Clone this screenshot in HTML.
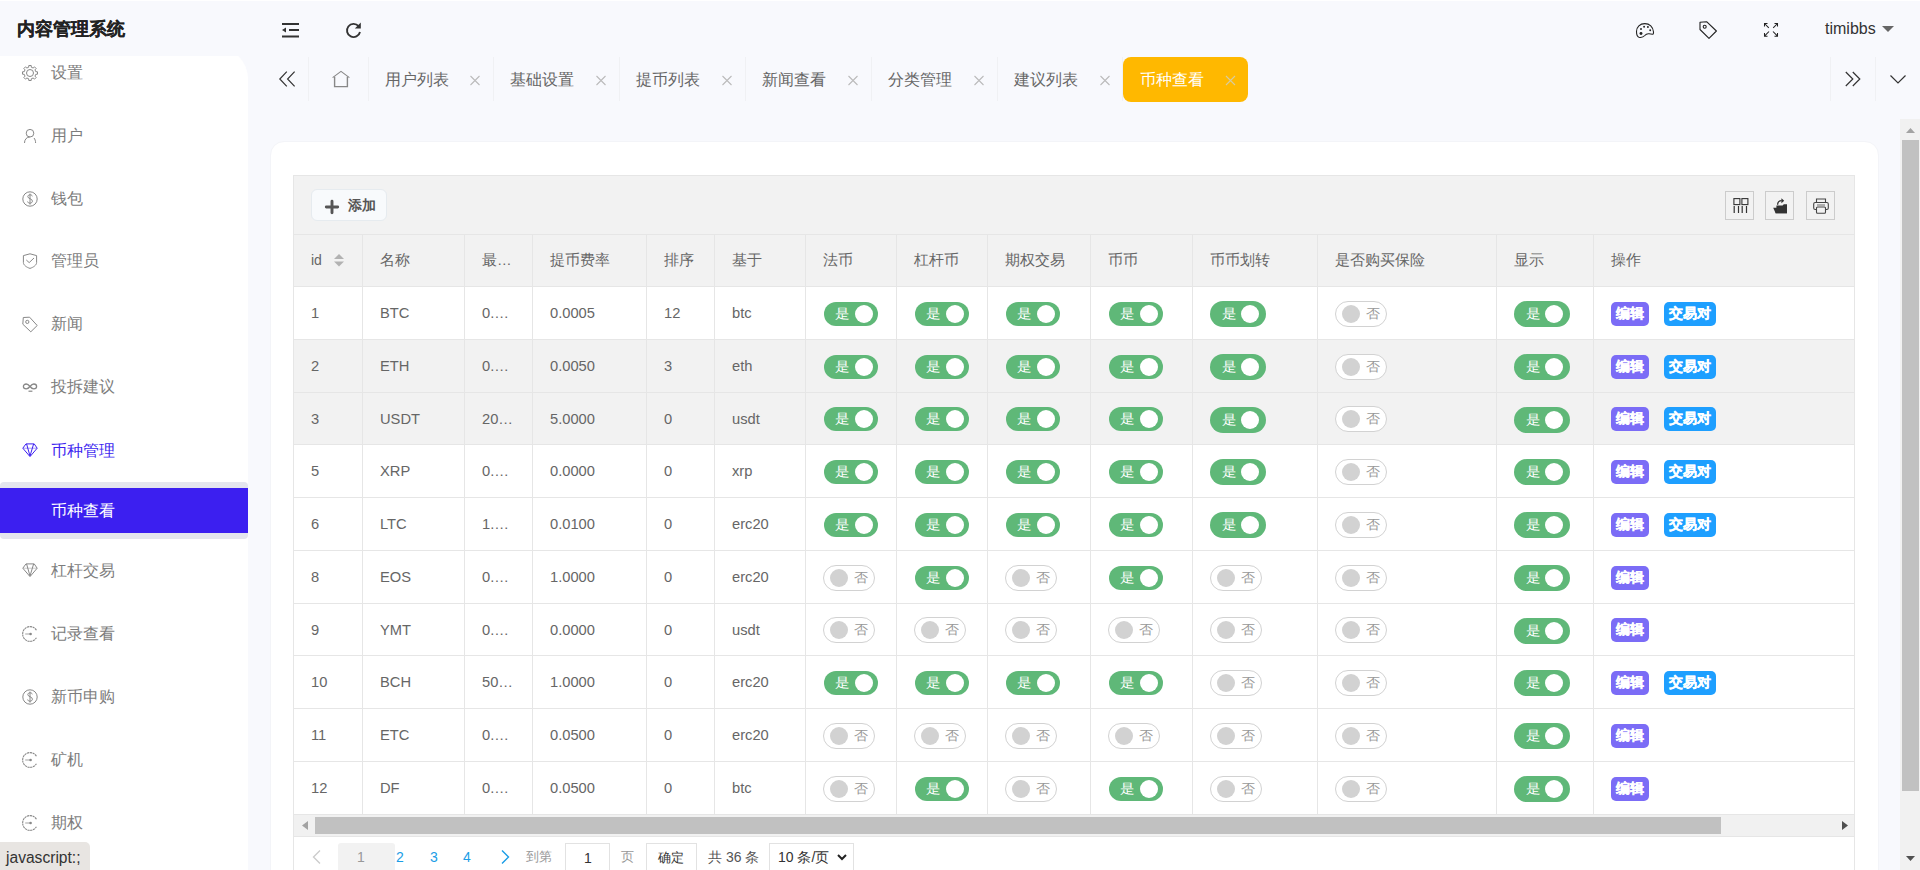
<!DOCTYPE html>
<html><head><meta charset="utf-8"><style>
*{margin:0;padding:0;box-sizing:border-box}
html,body{width:1920px;height:870px;overflow:hidden;background:#f8f9fd;font-family:"Liberation Sans",sans-serif;color:#666;position:relative}
.a{position:absolute}
svg.i{position:absolute;overflow:visible}
.logo{left:17px;top:18px;font-size:18px;font-weight:bold;color:#222;line-height:22px;white-space:nowrap;-webkit-text-stroke:0.2px #222}
.user{left:1825px;top:19px;font-size:16px;color:#333;line-height:20px}
.side{left:0;top:46.5px;width:248px;height:824px;background:#fff;border-top-right-radius:32px}
.mi{position:absolute;left:51px;font-size:16px;color:#7c7c7c;line-height:20px;white-space:nowrap}
.sub{left:0;top:482px;width:248px;height:57px;background:#e4e5ee;border-radius:4px}
.subsel{left:0;top:488px;width:248px;height:45px;background:#3c1ff0}
.status{left:0;top:842px;width:90px;height:28px;background:#e8e5e2;border-top-right-radius:5px;font-size:15.6px;color:#333;padding:7px 0 0 6px;line-height:18px;white-space:nowrap}
.tab{position:absolute;top:57px;height:44px;width:126px;border-left:1px solid #eceef2}
.tt{position:absolute;left:16px;top:12px;font-size:16px;line-height:20px;color:#666;white-space:nowrap}
.card{left:270px;top:141px;width:1609px;height:760px;background:#fff;border-radius:14px;border:1px solid #f3f4f8}
.tbl{left:293px;top:175px;width:1562px;height:720px;border:1px solid #e6e6e6;background:#fff}
.tool{left:294px;top:176px;width:1560px;height:59px;background:#f2f2f2}
.vs{left:1900px;top:119px;width:20px;height:751px;background:#f1f1f1}
.hl{position:absolute;height:1px;background:#e6e6e6}
.vl{position:absolute;width:1px;background:#e6e6e6}
.ht{position:absolute;font-size:14px;line-height:18px;color:#666;white-space:nowrap}
.ct{position:absolute;font-size:14.7px;line-height:18px;color:#666;white-space:nowrap}
.son{position:absolute;width:54px;height:24px;border-radius:12px;background:#5fb878}
.son b{position:absolute;left:31px;top:3px;width:18px;height:18px;border-radius:50%;background:#fff}
.son span{position:absolute;left:10.5px;top:5px;font-size:13px;line-height:14px;color:#fff;transform:scaleX(1.12);transform-origin:0 0}
.son.big{width:56px;height:26px;border-radius:13px}
.son.big b{left:31px;top:4px}
.son.big span{left:12px;top:6px}
.sof{position:absolute;width:52px;height:26px;border-radius:13px;border:1px solid #d2d2d2;background:#fff}
.sof b{position:absolute;left:6px;top:3px;width:18px;height:18px;border-radius:50%;background:#d2d2d2}
.sof span{position:absolute;left:29.5px;top:5px;font-size:13px;line-height:14px;color:#999;transform:scaleX(1.08);transform-origin:0 0}
.btn{position:absolute;height:24px;border-radius:5px;color:#fff;font-size:13.6px;font-weight:bold;-webkit-text-stroke:0.35px #fff;line-height:24px;text-align:center;white-space:nowrap}
.tb{position:absolute;top:191px;width:29px;height:29px;border:1px solid #ccc}
.pg{position:absolute;font-size:13px;line-height:16px;white-space:nowrap}
.box{position:absolute;top:843px;height:30px;border:1px solid #e2e2e2;background:#fff}
</style></head><body>
<div class="a" style="left:0;top:0;width:1920px;height:1px;background:#fff"></div>
<div class="a side"></div>
<div class="a" style="left:0;top:1px;width:260px;height:55px;background:#f8f9fd"></div>
<div class="a logo">内容管理系统</div>
<svg class="i" style="left:282px;top:22px" width="18" height="16" viewBox="0 0 18 16"><rect x="0" y="1" width="17" height="2" fill="#333"/><rect x="7" y="7" width="10" height="2" fill="#333"/><polygon points="0,8 4,5.5 4,10.5" fill="#333"/><rect x="0" y="13.5" width="17" height="2" fill="#333"/></svg>
<svg class="i" style="left:345px;top:22px" width="17" height="17" viewBox="0 0 17 17"><path d="M13.6 4.2 A6.6 6.6 0 1 0 15 10" fill="none" stroke="#333" stroke-width="1.9"/><polygon points="15.8,0.6 15.8,6.6 9.8,6.6" fill="#333"/></svg>
<svg class="i" style="left:1636px;top:23px" width="19" height="16" viewBox="0 0 19 16"><path d="M3 14.3 C1 13.5 0.5 11 0.5 8.5 C0.5 3.8 4 0.6 8.8 0.6 C13.5 0.6 17.2 4 17.5 9 C17.6 10.5 17.2 11.2 16.4 11.2 L13 10.8 C11 10.6 10 11 8.8 12.5 C7.5 14 5.5 14.8 3 14.3 Z" fill="none" stroke="#222" stroke-width="1.1"/><circle cx="5" cy="10.5" r="1.45" fill="#222"/><circle cx="5" cy="6" r="0.95" fill="#222"/><circle cx="8.1" cy="3.8" r="0.95" fill="#222"/><circle cx="11.9" cy="4" r="0.95" fill="#222"/><circle cx="14.2" cy="7.2" r="0.95" fill="#222"/></svg>
<svg class="i" style="left:1699px;top:21px" width="19" height="19" viewBox="0 0 19 19" fill="none" stroke="#222" stroke-width="1.1" stroke-linejoin="round"><path d="M1 1.2 L7.6 0.7 L17.4 10 L10 17.4 L1 8.5 Z"/><circle cx="5.7" cy="5.8" r="1.5"/></svg>
<svg class="i" style="left:1764px;top:23px" width="14" height="14" viewBox="0 0 14 14" fill="none" stroke="#222" stroke-width="1.05"><path d="M0.5 3.5 V0.5 H3.5 M0.5 0.5 L4.8 4.8"/><path d="M10.5 0.5 H13.5 V3.5 M13.5 0.5 L9.2 4.8"/><path d="M0.5 10 V13.2 H3.5 M0.5 13.2 L5 8.5"/><path d="M13.5 10 V13.2 H10.5 M13.5 13.2 L9 8.5"/></svg>
<div class="a user">timibbs</div>
<svg class="i" style="left:1882px;top:26px" width="12" height="6" viewBox="0 0 12 6"><polygon points="0,0 12,0 6,6" fill="#666"/></svg>
<svg class="i" style="left:22.4px;top:65px" width="16" height="16" viewBox="0 0 16 16" fill="none" stroke="#888" stroke-width="1"><polygon points="13.75,6.67 15.51,6.81 15.51,9.19 13.75,9.33 13.00,11.13 14.15,12.47 12.47,14.15 11.13,13.00 9.33,13.75 9.19,15.51 6.81,15.51 6.67,13.75 4.87,13.00 3.53,14.15 1.85,12.47 3.00,11.13 2.25,9.33 0.49,9.19 0.49,6.81 2.25,6.67 3.00,4.87 1.85,3.53 3.53,1.85 4.87,3.00 6.67,2.25 6.81,0.49 9.19,0.49 9.33,2.25 11.13,3.00 12.47,1.85 14.15,3.53 13.00,4.87" stroke-linejoin="round"/><circle cx="8" cy="8" r="3.5"/></svg>
<div class="mi" style="top:63.0px">设置</div>
<svg class="i" style="left:22.4px;top:127.5px" width="16" height="16" viewBox="0 0 16 16" fill="none" stroke="#888" stroke-width="1"><circle cx="8" cy="5.2" r="3.8"/><path d="M2.5 15 C2.5 11.5 4.5 9.2 7.8 9" /><path d="M12 10 C13 11.2 13.6 12.8 13.6 15"/></svg>
<div class="mi" style="top:125.5px">用户</div>
<svg class="i" style="left:22.4px;top:190.5px" width="16" height="16" viewBox="0 0 16 16" fill="none" stroke="#888" stroke-width="1"><circle cx="8" cy="8" r="7.2"/><path d="M10.3 5.3 C10.1 4.2 9.2 3.8 8 3.8 C6.7 3.8 5.8 4.6 5.8 5.6 C5.8 8 10.4 7.4 10.4 10.1 C10.4 11.3 9.4 12.2 8 12.2 C6.6 12.2 5.8 11.5 5.6 10.5 M8 2.6 V13.6"/></svg>
<div class="mi" style="top:188.5px">钱包</div>
<svg class="i" style="left:22.4px;top:253px" width="16" height="16" viewBox="0 0 16 16" fill="none" stroke="#888" stroke-width="1"><path d="M8 0.8 L14.6 2.6 V9.6 C14.6 12 11.5 14.3 8 15.4 C4.5 14.3 1.4 12 1.4 9.6 V2.6 Z" stroke-linejoin="round"/><path d="M4.3 7 L7.2 9.6 L12 5"/></svg>
<div class="mi" style="top:251.0px">管理员</div>
<svg class="i" style="left:22.4px;top:316px" width="16" height="16" viewBox="0 0 16 16" fill="none" stroke="#888" stroke-width="1"><path d="M1.3 1.5 L7.6 1.2 L15.2 9.5 L8.8 15.8 L0.8 8.2 Z" stroke-linejoin="round"/><circle cx="5.3" cy="5.9" r="1.6"/></svg>
<div class="mi" style="top:314.0px">新闻</div>
<svg class="i" style="left:22.4px;top:379px" width="16" height="16" viewBox="0 0 16 16" fill="none" stroke="#888" stroke-width="1"><path d="M8 7.5 C6.8 6 5.8 5 4.2 5 C2.6 5 1.4 6.2 1.4 7.5 C1.4 8.8 2.6 9.9 4.2 9.9 C5.8 9.9 6.8 9 8 7.5 C9.2 6 10.2 5 11.8 5 C13.4 5 14.6 6.2 14.6 7.5 C14.6 8.8 13.4 9.9 11.8 9.9 C10.2 9.9 9.2 9 8 7.5 Z" stroke-width="1.3"/><path d="M6.5 12.2 H10.4" stroke-width="1.2"/></svg>
<div class="mi" style="top:377.0px">投拆建议</div>
<svg class="i" style="left:22.4px;top:442.5px" width="16" height="16" viewBox="0 0 16 16" fill="none" stroke="#3c1ff0" stroke-width="1"><path d="M4 0.9 H12.2 L15.2 5.2 L8 13.6 L0.8 5.2 Z" stroke-linejoin="round"/><path d="M1 5.2 H15" stroke-opacity="0.45"/><path d="M4.6 1 L8 13 L11.6 1"/></svg>
<div class="mi" style="top:440.5px;color:#3c1ff0">币种管理</div>
<svg class="i" style="left:22.4px;top:562.5px" width="16" height="16" viewBox="0 0 16 16" fill="none" stroke="#888" stroke-width="1"><path d="M4 0.9 H12.2 L15.2 5.2 L8 13.6 L0.8 5.2 Z" stroke-linejoin="round"/><path d="M1 5.2 H15" stroke-opacity="0.45"/><path d="M4.6 1 L8 13 L11.6 1"/></svg>
<div class="mi" style="top:560.5px">杠杆交易</div>
<svg class="i" style="left:22.4px;top:625.5px" width="16" height="16" viewBox="0 0 16 16" fill="none" stroke="#888" stroke-width="1"><path d="M14.4 4.2 A7.4 7.4 0 1 0 14.4 11.8" stroke-dasharray="2.2 0.6" stroke-width="1.1"/><path d="M3.2 8 H8.5" stroke-width="1.3" stroke-opacity="0.6"/><circle cx="8.6" cy="8" r="1.3" fill="#888" stroke="none"/></svg>
<div class="mi" style="top:623.5px">记录查看</div>
<svg class="i" style="left:22.4px;top:688.5px" width="16" height="16" viewBox="0 0 16 16" fill="none" stroke="#888" stroke-width="1"><circle cx="8" cy="8" r="7.2"/><path d="M10.3 5.3 C10.1 4.2 9.2 3.8 8 3.8 C6.7 3.8 5.8 4.6 5.8 5.6 C5.8 8 10.4 7.4 10.4 10.1 C10.4 11.3 9.4 12.2 8 12.2 C6.6 12.2 5.8 11.5 5.6 10.5 M8 2.6 V13.6"/></svg>
<div class="mi" style="top:686.5px">新币申购</div>
<svg class="i" style="left:22.4px;top:751.5px" width="16" height="16" viewBox="0 0 16 16" fill="none" stroke="#888" stroke-width="1"><path d="M14.4 4.2 A7.4 7.4 0 1 0 14.4 11.8" stroke-dasharray="2.2 0.6" stroke-width="1.1"/><path d="M3.2 8 H8.5" stroke-width="1.3" stroke-opacity="0.6"/><circle cx="8.6" cy="8" r="1.3" fill="#888" stroke="none"/></svg>
<div class="mi" style="top:749.5px">矿机</div>
<svg class="i" style="left:22.4px;top:814.5px" width="16" height="16" viewBox="0 0 16 16" fill="none" stroke="#888" stroke-width="1"><path d="M14.4 4.2 A7.4 7.4 0 1 0 14.4 11.8" stroke-dasharray="2.2 0.6" stroke-width="1.1"/><path d="M3.2 8 H8.5" stroke-width="1.3" stroke-opacity="0.6"/><circle cx="8.6" cy="8" r="1.3" fill="#888" stroke="none"/></svg>
<div class="mi" style="top:812.5px">期权</div>
<div class="a sub"></div><div class="a subsel"></div>
<div class="mi" style="top:501px;color:#fff">币种查看</div>
<div class="a status">javascript:;</div>
<svg class="i" style="left:279px;top:71px" width="17" height="17" viewBox="0 0 17 17" fill="none" stroke="#333" stroke-width="1.2"><path d="M7.8 0.6 L0.8 8 L7.8 15.4"/><path d="M15.6 0.6 L8.6 8 L15.6 15.4"/></svg>
<div class="a" style="left:308px;top:57px;width:1px;height:44px;background:#f0f1f4"></div>
<svg class="i" style="left:332px;top:71px" width="18" height="17" viewBox="0 0 18 17" fill="none" stroke="#888" stroke-width="1.1"><path d="M0.6 6.6 L9 0.4 L17.4 6.6"/><path d="M2.6 5.8 V15.6 H15.4 V5.8" stroke-width="1.4"/></svg>
<div class="a" style="left:367.5px;top:57px;width:1px;height:44px;background:#f0f1f4"></div>
<div class="tt" style="left:384.5px;top:70px">用户列表</div>
<svg class="i" style="left:470.0px;top:76px" width="10" height="9" viewBox="0 0 10 9" stroke="#bbb" stroke-width="1.1"><path d="M0.5 0 L9.5 9 M9.5 0 L0.5 9"/></svg>
<div class="a" style="left:493.4px;top:57px;width:1px;height:44px;background:#f0f1f4"></div>
<div class="tt" style="left:510.4px;top:70px">基础设置</div>
<svg class="i" style="left:595.9px;top:76px" width="10" height="9" viewBox="0 0 10 9" stroke="#bbb" stroke-width="1.1"><path d="M0.5 0 L9.5 9 M9.5 0 L0.5 9"/></svg>
<div class="a" style="left:619.3px;top:57px;width:1px;height:44px;background:#f0f1f4"></div>
<div class="tt" style="left:636.3px;top:70px">提币列表</div>
<svg class="i" style="left:721.8px;top:76px" width="10" height="9" viewBox="0 0 10 9" stroke="#bbb" stroke-width="1.1"><path d="M0.5 0 L9.5 9 M9.5 0 L0.5 9"/></svg>
<div class="a" style="left:745.2px;top:57px;width:1px;height:44px;background:#f0f1f4"></div>
<div class="tt" style="left:762.2px;top:70px">新闻查看</div>
<svg class="i" style="left:847.7px;top:76px" width="10" height="9" viewBox="0 0 10 9" stroke="#bbb" stroke-width="1.1"><path d="M0.5 0 L9.5 9 M9.5 0 L0.5 9"/></svg>
<div class="a" style="left:871.1px;top:57px;width:1px;height:44px;background:#f0f1f4"></div>
<div class="tt" style="left:888.1px;top:70px">分类管理</div>
<svg class="i" style="left:973.6px;top:76px" width="10" height="9" viewBox="0 0 10 9" stroke="#bbb" stroke-width="1.1"><path d="M0.5 0 L9.5 9 M9.5 0 L0.5 9"/></svg>
<div class="a" style="left:997.0px;top:57px;width:1px;height:44px;background:#f0f1f4"></div>
<div class="tt" style="left:1014.0px;top:70px">建议列表</div>
<svg class="i" style="left:1099.5px;top:76px" width="10" height="9" viewBox="0 0 10 9" stroke="#bbb" stroke-width="1.1"><path d="M0.5 0 L9.5 9 M9.5 0 L0.5 9"/></svg>
<div class="a" style="left:1123px;top:57px;width:125px;height:45px;background:#ffb800;border-radius:8px"></div>
<div class="tt" style="left:1140px;top:70px;color:#fff">币种查看</div>
<svg class="i" style="left:1226px;top:76px" width="9" height="9" viewBox="0 0 9 9" stroke="#d6cba0" stroke-width="1.1"><path d="M0 0 L9 9 M9 0 L0 9"/></svg>
<div class="a" style="left:1122px;top:57px;width:1px;height:44px;background:#f0f1f4"></div>
<div class="a" style="left:1830px;top:57px;width:1px;height:44px;background:#f0f1f4"></div>
<div class="a" style="left:1875px;top:57px;width:1px;height:44px;background:#f0f1f4"></div>
<svg class="i" style="left:1845px;top:71px" width="17" height="17" viewBox="0 0 17 17" fill="none" stroke="#333" stroke-width="1.2"><path d="M0.8 1 L7.8 8 L0.8 15"/><path d="M7.8 1 L14.8 8 L7.8 15"/></svg>
<svg class="i" style="left:1890px;top:75px" width="16" height="9" viewBox="0 0 16 9" fill="none" stroke="#333" stroke-width="1.2"><path d="M0.5 0.5 L8 8 L15.5 0.5"/></svg>
<div class="a card"></div>
<div class="a tbl"></div>
<div class="a tool"></div>
<div class="a" style="left:311px;top:189px;width:76px;height:32px;background:#f8fafc;border:1px solid #e6ebef;border-radius:6px"></div>
<svg class="i" style="left:325px;top:200px" width="14" height="14" viewBox="0 0 14 14"><path d="M1.3 7 H12.7 M7 1.3 V12.7" stroke="#555" stroke-width="2.9" stroke-linecap="round"/></svg>
<div class="a" style="left:348px;top:198px;font-size:13.5px;line-height:16px;font-weight:bold;color:#555">添加</div>
<div class="tb" style="left:1725px"></div>
<div class="tb" style="left:1765px"></div>
<div class="tb" style="left:1806px"></div>
<svg class="i" style="left:1733px;top:198px" width="16" height="16" viewBox="0 0 16 16" fill="none" stroke="#333" stroke-width="1.1"><rect x="0.9" y="0.6" width="6" height="6"/><rect x="8.9" y="0.6" width="6" height="6"/><path d="M1.2 8 V15 M5.5 8 V15 M9.2 8 V15 M13.5 8 V15" stroke-width="1.2"/></svg>
<svg class="i" style="left:1773px;top:198px" width="15" height="16" viewBox="0 0 15 16"><path d="M2.6 15.2 H14 V6.2 H10.8 L9.6 7.6 H3.4 V9.6 Z" fill="#333"/><path d="M0.2 9.7 H11.5 L14 15.2 H2.6 Z" fill="#333"/><path d="M4.6 6.8 C4.6 4 6.2 2.6 8.6 2.6" fill="none" stroke="#333" stroke-width="1.3"/><polygon points="8.4,0.2 11.2,2.7 8.4,5.2" fill="#333"/></svg>
<svg class="i" style="left:1813px;top:198px" width="16" height="16" viewBox="0 0 16 16" fill="none" stroke="#444" stroke-width="1.1"><path d="M3.5 4.5 V1 H12.5 V4.5"/><rect x="0.7" y="4.5" width="14.6" height="7" rx="1.5"/><rect x="3.5" y="9" width="9" height="6.2" rx="1" fill="#f2f2f2"/><path d="M4 7 H12" stroke="#777"/></svg>
<div class="a" style="left:294px;top:235px;width:1560px;height:52px;background:#f2f2f2"></div>
<div class="a" style="left:294px;top:339px;width:1560px;height:53px;background:#f2f2f2"></div>
<div class="a" style="left:294px;top:392px;width:1560px;height:52px;background:#f2f2f2"></div>
<div class="hl" style="left:294px;top:234px;width:1561px"></div>
<div class="hl" style="left:294px;top:286px;width:1561px"></div>
<div class="hl" style="left:294px;top:339px;width:1561px"></div>
<div class="hl" style="left:294px;top:392px;width:1561px"></div>
<div class="hl" style="left:294px;top:444px;width:1561px"></div>
<div class="hl" style="left:294px;top:497px;width:1561px"></div>
<div class="hl" style="left:294px;top:550px;width:1561px"></div>
<div class="hl" style="left:294px;top:603px;width:1561px"></div>
<div class="hl" style="left:294px;top:655px;width:1561px"></div>
<div class="hl" style="left:294px;top:708px;width:1561px"></div>
<div class="hl" style="left:294px;top:761px;width:1561px"></div>
<div class="hl" style="left:294px;top:814px;width:1561px"></div>
<div class="vl" style="left:362px;top:235px;height:579px"></div>
<div class="vl" style="left:464px;top:235px;height:579px"></div>
<div class="vl" style="left:532px;top:235px;height:579px"></div>
<div class="vl" style="left:646px;top:235px;height:579px"></div>
<div class="vl" style="left:714px;top:235px;height:579px"></div>
<div class="vl" style="left:805px;top:235px;height:579px"></div>
<div class="vl" style="left:896px;top:235px;height:579px"></div>
<div class="vl" style="left:987px;top:235px;height:579px"></div>
<div class="vl" style="left:1090px;top:235px;height:579px"></div>
<div class="vl" style="left:1192px;top:235px;height:579px"></div>
<div class="vl" style="left:1317px;top:235px;height:579px"></div>
<div class="vl" style="left:1496px;top:235px;height:579px"></div>
<div class="vl" style="left:1593px;top:235px;height:579px"></div>
<div class="ht" style="left:311.0px;top:251px">id</div>
<div class="ht" style="left:380.0px;top:251px;font-size:14.6px">名称</div>
<div class="ht" style="left:482.0px;top:251px;font-size:14.6px">最…</div>
<div class="ht" style="left:550.0px;top:251px;font-size:14.6px">提币费率</div>
<div class="ht" style="left:664.0px;top:251px;font-size:14.6px">排序</div>
<div class="ht" style="left:732.0px;top:251px;font-size:14.6px">基于</div>
<div class="ht" style="left:823.0px;top:251px;font-size:14.6px">法币</div>
<div class="ht" style="left:914.0px;top:251px;font-size:14.6px">杠杆币</div>
<div class="ht" style="left:1005.0px;top:251px;font-size:14.6px">期权交易</div>
<div class="ht" style="left:1108.0px;top:251px;font-size:14.6px">币币</div>
<div class="ht" style="left:1210.0px;top:251px;font-size:14.6px">币币划转</div>
<div class="ht" style="left:1335.0px;top:251px;font-size:14.6px">是否购买保险</div>
<div class="ht" style="left:1514.0px;top:251px;font-size:14.6px">显示</div>
<div class="ht" style="left:1611.0px;top:251px;font-size:14.6px">操作</div>
<svg class="i" style="left:334px;top:254px" width="10" height="13" viewBox="0 0 10 13"><polygon points="5,0 10,5 0,5" fill="#b2b2b2"/><polygon points="0,7.5 10,7.5 5,12.5" fill="#b2b2b2"/></svg>
<div class="ct" style="left:311px;top:304.0px">1</div>
<div class="ct" style="left:380px;top:304.0px">BTC</div>
<div class="ct" style="left:482px;top:304.0px">0.…</div>
<div class="ct" style="left:550px;top:304.0px">0.0005</div>
<div class="ct" style="left:664px;top:304.0px">12</div>
<div class="ct" style="left:732px;top:304.0px">btc</div>
<div class="son" style="left:824.0px;top:301.8px"><span>是</span><b></b></div>
<div class="son" style="left:915.0px;top:301.8px"><span>是</span><b></b></div>
<div class="son" style="left:1006.0px;top:301.8px"><span>是</span><b></b></div>
<div class="son" style="left:1109.0px;top:301.8px"><span>是</span><b></b></div>
<div class="son big" style="left:1209.9px;top:301.0px"><span>是</span><b></b></div>
<div class="sof" style="left:1335.0px;top:300.9px"><b></b><span>否</span></div>
<div class="son big" style="left:1513.9px;top:301.0px"><span>是</span><b></b></div>
<div class="btn" style="left:1611px;top:301.5px;width:38px;background:#7b6cf6">编辑</div>
<div class="btn" style="left:1664px;top:301.5px;width:52px;background:#1e9fff">交易对</div>
<div class="ct" style="left:311px;top:357.0px">2</div>
<div class="ct" style="left:380px;top:357.0px">ETH</div>
<div class="ct" style="left:482px;top:357.0px">0.…</div>
<div class="ct" style="left:550px;top:357.0px">0.0050</div>
<div class="ct" style="left:664px;top:357.0px">3</div>
<div class="ct" style="left:732px;top:357.0px">eth</div>
<div class="son" style="left:824.0px;top:354.8px"><span>是</span><b></b></div>
<div class="son" style="left:915.0px;top:354.8px"><span>是</span><b></b></div>
<div class="son" style="left:1006.0px;top:354.8px"><span>是</span><b></b></div>
<div class="son" style="left:1109.0px;top:354.8px"><span>是</span><b></b></div>
<div class="son big" style="left:1209.9px;top:354.0px"><span>是</span><b></b></div>
<div class="sof" style="left:1335.0px;top:353.9px"><b></b><span>否</span></div>
<div class="son big" style="left:1513.9px;top:354.0px"><span>是</span><b></b></div>
<div class="btn" style="left:1611px;top:354.5px;width:38px;background:#7b6cf6">编辑</div>
<div class="btn" style="left:1664px;top:354.5px;width:52px;background:#1e9fff">交易对</div>
<div class="ct" style="left:311px;top:409.5px">3</div>
<div class="ct" style="left:380px;top:409.5px">USDT</div>
<div class="ct" style="left:482px;top:409.5px">20…</div>
<div class="ct" style="left:550px;top:409.5px">5.0000</div>
<div class="ct" style="left:664px;top:409.5px">0</div>
<div class="ct" style="left:732px;top:409.5px">usdt</div>
<div class="son" style="left:824.0px;top:407.3px"><span>是</span><b></b></div>
<div class="son" style="left:915.0px;top:407.3px"><span>是</span><b></b></div>
<div class="son" style="left:1006.0px;top:407.3px"><span>是</span><b></b></div>
<div class="son" style="left:1109.0px;top:407.3px"><span>是</span><b></b></div>
<div class="son big" style="left:1209.9px;top:406.5px"><span>是</span><b></b></div>
<div class="sof" style="left:1335.0px;top:406.4px"><b></b><span>否</span></div>
<div class="son big" style="left:1513.9px;top:406.5px"><span>是</span><b></b></div>
<div class="btn" style="left:1611px;top:407.0px;width:38px;background:#7b6cf6">编辑</div>
<div class="btn" style="left:1664px;top:407.0px;width:52px;background:#1e9fff">交易对</div>
<div class="ct" style="left:311px;top:462.0px">5</div>
<div class="ct" style="left:380px;top:462.0px">XRP</div>
<div class="ct" style="left:482px;top:462.0px">0.…</div>
<div class="ct" style="left:550px;top:462.0px">0.0000</div>
<div class="ct" style="left:664px;top:462.0px">0</div>
<div class="ct" style="left:732px;top:462.0px">xrp</div>
<div class="son" style="left:824.0px;top:459.8px"><span>是</span><b></b></div>
<div class="son" style="left:915.0px;top:459.8px"><span>是</span><b></b></div>
<div class="son" style="left:1006.0px;top:459.8px"><span>是</span><b></b></div>
<div class="son" style="left:1109.0px;top:459.8px"><span>是</span><b></b></div>
<div class="son big" style="left:1209.9px;top:459.0px"><span>是</span><b></b></div>
<div class="sof" style="left:1335.0px;top:458.9px"><b></b><span>否</span></div>
<div class="son big" style="left:1513.9px;top:459.0px"><span>是</span><b></b></div>
<div class="btn" style="left:1611px;top:459.5px;width:38px;background:#7b6cf6">编辑</div>
<div class="btn" style="left:1664px;top:459.5px;width:52px;background:#1e9fff">交易对</div>
<div class="ct" style="left:311px;top:515.0px">6</div>
<div class="ct" style="left:380px;top:515.0px">LTC</div>
<div class="ct" style="left:482px;top:515.0px">1.…</div>
<div class="ct" style="left:550px;top:515.0px">0.0100</div>
<div class="ct" style="left:664px;top:515.0px">0</div>
<div class="ct" style="left:732px;top:515.0px">erc20</div>
<div class="son" style="left:824.0px;top:512.8px"><span>是</span><b></b></div>
<div class="son" style="left:915.0px;top:512.8px"><span>是</span><b></b></div>
<div class="son" style="left:1006.0px;top:512.8px"><span>是</span><b></b></div>
<div class="son" style="left:1109.0px;top:512.8px"><span>是</span><b></b></div>
<div class="son big" style="left:1209.9px;top:512.0px"><span>是</span><b></b></div>
<div class="sof" style="left:1335.0px;top:511.9px"><b></b><span>否</span></div>
<div class="son big" style="left:1513.9px;top:512.0px"><span>是</span><b></b></div>
<div class="btn" style="left:1611px;top:512.5px;width:38px;background:#7b6cf6">编辑</div>
<div class="btn" style="left:1664px;top:512.5px;width:52px;background:#1e9fff">交易对</div>
<div class="ct" style="left:311px;top:568.0px">8</div>
<div class="ct" style="left:380px;top:568.0px">EOS</div>
<div class="ct" style="left:482px;top:568.0px">0.…</div>
<div class="ct" style="left:550px;top:568.0px">1.0000</div>
<div class="ct" style="left:664px;top:568.0px">0</div>
<div class="ct" style="left:732px;top:568.0px">erc20</div>
<div class="sof" style="left:823.0px;top:564.9px"><b></b><span>否</span></div>
<div class="son" style="left:915.0px;top:565.8px"><span>是</span><b></b></div>
<div class="sof" style="left:1005.0px;top:564.9px"><b></b><span>否</span></div>
<div class="son" style="left:1109.0px;top:565.8px"><span>是</span><b></b></div>
<div class="sof" style="left:1210.0px;top:564.9px"><b></b><span>否</span></div>
<div class="sof" style="left:1335.0px;top:564.9px"><b></b><span>否</span></div>
<div class="son big" style="left:1513.9px;top:565.0px"><span>是</span><b></b></div>
<div class="btn" style="left:1611px;top:565.5px;width:38px;background:#7b6cf6">编辑</div>
<div class="ct" style="left:311px;top:620.5px">9</div>
<div class="ct" style="left:380px;top:620.5px">YMT</div>
<div class="ct" style="left:482px;top:620.5px">0.…</div>
<div class="ct" style="left:550px;top:620.5px">0.0000</div>
<div class="ct" style="left:664px;top:620.5px">0</div>
<div class="ct" style="left:732px;top:620.5px">usdt</div>
<div class="sof" style="left:823.0px;top:617.4px"><b></b><span>否</span></div>
<div class="sof" style="left:914.0px;top:617.4px"><b></b><span>否</span></div>
<div class="sof" style="left:1005.0px;top:617.4px"><b></b><span>否</span></div>
<div class="sof" style="left:1108.0px;top:617.4px"><b></b><span>否</span></div>
<div class="sof" style="left:1210.0px;top:617.4px"><b></b><span>否</span></div>
<div class="sof" style="left:1335.0px;top:617.4px"><b></b><span>否</span></div>
<div class="son big" style="left:1513.9px;top:617.5px"><span>是</span><b></b></div>
<div class="btn" style="left:1611px;top:618.0px;width:38px;background:#7b6cf6">编辑</div>
<div class="ct" style="left:311px;top:673.0px">10</div>
<div class="ct" style="left:380px;top:673.0px">BCH</div>
<div class="ct" style="left:482px;top:673.0px">50…</div>
<div class="ct" style="left:550px;top:673.0px">1.0000</div>
<div class="ct" style="left:664px;top:673.0px">0</div>
<div class="ct" style="left:732px;top:673.0px">erc20</div>
<div class="son" style="left:824.0px;top:670.8px"><span>是</span><b></b></div>
<div class="son" style="left:915.0px;top:670.8px"><span>是</span><b></b></div>
<div class="son" style="left:1006.0px;top:670.8px"><span>是</span><b></b></div>
<div class="son" style="left:1109.0px;top:670.8px"><span>是</span><b></b></div>
<div class="sof" style="left:1210.0px;top:669.9px"><b></b><span>否</span></div>
<div class="sof" style="left:1335.0px;top:669.9px"><b></b><span>否</span></div>
<div class="son big" style="left:1513.9px;top:670.0px"><span>是</span><b></b></div>
<div class="btn" style="left:1611px;top:670.5px;width:38px;background:#7b6cf6">编辑</div>
<div class="btn" style="left:1664px;top:670.5px;width:52px;background:#1e9fff">交易对</div>
<div class="ct" style="left:311px;top:726.0px">11</div>
<div class="ct" style="left:380px;top:726.0px">ETC</div>
<div class="ct" style="left:482px;top:726.0px">0.…</div>
<div class="ct" style="left:550px;top:726.0px">0.0500</div>
<div class="ct" style="left:664px;top:726.0px">0</div>
<div class="ct" style="left:732px;top:726.0px">erc20</div>
<div class="sof" style="left:823.0px;top:722.9px"><b></b><span>否</span></div>
<div class="sof" style="left:914.0px;top:722.9px"><b></b><span>否</span></div>
<div class="sof" style="left:1005.0px;top:722.9px"><b></b><span>否</span></div>
<div class="sof" style="left:1108.0px;top:722.9px"><b></b><span>否</span></div>
<div class="sof" style="left:1210.0px;top:722.9px"><b></b><span>否</span></div>
<div class="sof" style="left:1335.0px;top:722.9px"><b></b><span>否</span></div>
<div class="son big" style="left:1513.9px;top:723.0px"><span>是</span><b></b></div>
<div class="btn" style="left:1611px;top:723.5px;width:38px;background:#7b6cf6">编辑</div>
<div class="ct" style="left:311px;top:779.0px">12</div>
<div class="ct" style="left:380px;top:779.0px">DF</div>
<div class="ct" style="left:482px;top:779.0px">0.…</div>
<div class="ct" style="left:550px;top:779.0px">0.0500</div>
<div class="ct" style="left:664px;top:779.0px">0</div>
<div class="ct" style="left:732px;top:779.0px">btc</div>
<div class="sof" style="left:823.0px;top:775.9px"><b></b><span>否</span></div>
<div class="son" style="left:915.0px;top:776.8px"><span>是</span><b></b></div>
<div class="sof" style="left:1005.0px;top:775.9px"><b></b><span>否</span></div>
<div class="son" style="left:1109.0px;top:776.8px"><span>是</span><b></b></div>
<div class="sof" style="left:1210.0px;top:775.9px"><b></b><span>否</span></div>
<div class="sof" style="left:1335.0px;top:775.9px"><b></b><span>否</span></div>
<div class="son big" style="left:1513.9px;top:776.0px"><span>是</span><b></b></div>
<div class="btn" style="left:1611px;top:776.5px;width:38px;background:#7b6cf6">编辑</div>
<div class="a" style="left:294px;top:815px;width:1560px;height:21px;background:#f1f1f1"></div>
<div class="a" style="left:315px;top:817px;width:1406px;height:17px;background:#c1c1c1"></div>
<svg class="i" style="left:302px;top:821px" width="6" height="9" viewBox="0 0 6 9"><polygon points="6,0 6,9 0,4.5" fill="#a3a3a3"/></svg>
<svg class="i" style="left:1842px;top:821px" width="6" height="9" viewBox="0 0 6 9"><polygon points="0,0 0,9 6,4.5" fill="#505050"/></svg>
<div class="hl" style="left:294px;top:835.5px;width:1561px"></div>
<div class="a" style="left:338px;top:843px;width:57px;height:30px;background:#f2f2f2;border-radius:3px"></div>
<svg class="i" style="left:312px;top:850px" width="9" height="14" viewBox="0 0 9 14" fill="none" stroke="#ccc" stroke-width="1.4"><path d="M8 0.5 L1.5 7 L8 13.5"/></svg>
<div class="pg" style="left:357px;top:849px;color:#999;font-size:14px">1</div>
<div class="pg" style="left:396px;top:849px;color:#1a9de6;font-size:14px">2</div>
<div class="pg" style="left:430px;top:849px;color:#1a9de6;font-size:14px">3</div>
<div class="pg" style="left:463px;top:849px;color:#1a9de6;font-size:14px">4</div>
<svg class="i" style="left:501px;top:850px" width="9" height="14" viewBox="0 0 9 14" fill="none" stroke="#1a9de6" stroke-width="1.4"><path d="M1 0.5 L7.5 7 L1 13.5"/></svg>
<div class="pg" style="left:526px;top:849px;color:#999">到第</div>
<div class="box" style="left:565px;width:45px"></div>
<div class="pg" style="left:584px;top:850px;color:#333;font-size:14px">1</div>
<div class="pg" style="left:621px;top:849px;color:#999">页</div>
<div class="box" style="left:646px;width:51px"></div>
<div class="pg" style="left:658px;top:850px;color:#333">确定</div>
<div class="pg" style="left:708px;top:849px;color:#555;font-size:14px">共 36 条</div>
<div class="box" style="left:769px;width:85px"></div>
<div class="pg" style="left:778px;top:849px;color:#333;font-size:14px">10 条/页</div>
<svg class="i" style="left:837px;top:854px" width="10" height="7" viewBox="0 0 10 7" fill="none" stroke="#222" stroke-width="2"><path d="M1 1 L5 5 L9 1"/></svg>
<div class="a vs"></div>
<div class="a" style="left:1902px;top:140px;width:17px;height:651px;background:#c1c1c1"></div>
<svg class="i" style="left:1906px;top:128px" width="9" height="5" viewBox="0 0 9 5"><polygon points="0,5 9,5 4.5,0" fill="#a3a3a3"/></svg>
<svg class="i" style="left:1906px;top:856px" width="9" height="5" viewBox="0 0 9 5"><polygon points="0,0 9,0 4.5,5" fill="#505050"/></svg>
</body></html>
